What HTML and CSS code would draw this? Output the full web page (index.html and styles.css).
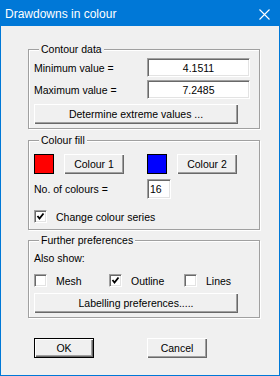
FILE: index.html
```html
<!DOCTYPE html>
<html lang="en">
<head>
    <meta charset="UTF-8">
    <title>Drawdowns in colour</title>
    <link rel="stylesheet" href="styles.css">
</head>
<body>
    <div class="window">
        <div class="titlebar">
            <span class="title">Drawdowns in colour</span>
            <svg class="close" width="11" height="11" viewBox="0 0 11 11">
                <path d="M0.5 0.5 L10.5 10.5 M10.5 0.5 L0.5 10.5" stroke="#fff" stroke-width="1.1" fill="none"/>
            </svg>
        </div>
        <div class="client">
            <fieldset class="group contour">
                <legend>Contour data</legend>
                <div class="row first">
                    <span class="label">Minimum value =</span>
                    <input class="edit value" type="text" value="4.1511">
                </div>
                <div class="row">
                    <span class="label">Maximum value =</span>
                    <input class="edit value" type="text" value="7.2485">
                </div>
                <button class="btn wide">Determine extreme values ...</button>
            </fieldset>

            <fieldset class="group fill">
                <legend>Colour fill</legend>
                <div class="row swatches">
                    <span class="swatch red"></span>
                    <button class="btn colour">Colour 1</button>
                    <span class="swatch blue"></span>
                    <button class="btn colour">Colour 2</button>
                </div>
                <div class="row count">
                    <span class="label">No. of colours =</span>
                    <input class="edit small" type="text" value="16">
                </div>
                <label class="check series">
                    <span class="box checked"><svg width="11" height="11" viewBox="0 0 11 11"><path d="M2.5 5 L4.5 7.5 L8.5 2.5" stroke="#000" stroke-width="1.8" fill="none"/></svg></span>
                    <span>Change colour series</span>
                </label>
            </fieldset>

            <fieldset class="group prefs">
                <legend>Further preferences</legend>
                <div class="also">Also show:</div>
                <div class="checks">
                    <label class="check"><span class="box"></span><span>Mesh</span></label>
                    <label class="check"><span class="box checked"><svg width="11" height="11" viewBox="0 0 11 11"><path d="M2.5 5 L4.5 7.5 L8.5 2.5" stroke="#000" stroke-width="1.8" fill="none"/></svg></span><span>Outline</span></label>
                    <label class="check"><span class="box"></span><span>Lines</span></label>
                </div>
                <button class="btn wide">Labelling preferences.....</button>
            </fieldset>

            <div class="actions">
                <button class="btn default">OK</button>
                <button class="btn">Cancel</button>
            </div>
        </div>
    </div>
</body>
</html>
```

FILE: styles.css
```css
* {
    margin: 0;
    padding: 0;
    box-sizing: border-box;
}

body {
    background-color: #f0f0f0;
    font-family: "Liberation Sans", Arial, sans-serif;
    font-size: 10.5px;
    color: #000;
}

.window {
    width: 280px;
    height: 376px;
    border: 1px solid #0078d7;
    background-color: #f0f0f0;
}

.titlebar {
    height: 25px;
    background-color: #0078d7;
    color: #fff;
    display: flex;
    align-items: center;
    justify-content: space-between;
    padding: 0 9px 0 4px;
}

.title {
    font-size: 12px;
}

.close {
    display: block;
    margin-top: 1px;
}

.group {
    width: 232px;
    margin-left: 27px;
    padding: 0 5px;
    min-width: 0;
    border: 1px solid #a0a0a0;
    box-shadow: inset 1px 1px 0 #fff, 1px 1px 0 #fff;
}

.group legend {
    margin-left: 5px;
    padding: 0 2px;
    line-height: 13px;
    background-color: #f0f0f0;
}

.contour {
    margin-top: 17px;
    padding-bottom: 4px;
}

.fill {
    margin-top: 5px;
    padding-bottom: 5px;
}

.prefs {
    margin-top: 4px;
    padding-bottom: 4px;
}

.row {
    display: flex;
    align-items: center;
    height: 19px;
    margin-top: 3px;
}

.row.first {
    margin-top: 2px;
}

.label {
    width: 113px;
}

.edit {
    height: 19px;
    font-family: inherit;
    font-size: 10.5px;
    color: #000;
    background-color: #fff;
    border: 1px solid;
    border-color: #a0a0a0 #fff #fff #a0a0a0;
    box-shadow: inset 1px 1px 0 #696969, inset -1px -1px 0 #e3e3e3;
    outline: none;
}

.edit.value {
    width: 103px;
    text-align: center;
}

.edit.small {
    width: 24px;
    height: 20px;
    padding-left: 2px;
}

.btn {
    display: block;
    height: 20px;
    font-family: inherit;
    font-size: 10.5px;
    color: #000;
    background-color: #f0f0f0;
    border: none;
    box-shadow: inset 1px 1px 0 #fff, inset -1px -1px 0 #696969, inset -2px -2px 0 #a0a0a0;
}

.btn.wide {
    width: 204px;
    margin-top: 5px;
}

.swatches {
    height: 20px;
    margin-top: 7px;
}

.swatch {
    width: 20px;
    height: 20px;
    border: 1px solid #000;
}

.swatch.red {
    background-color: #ff0000;
    margin-right: 10px;
}

.swatch.blue {
    background-color: #0000ff;
    margin: 0 10px 0 23px;
}

.btn.colour {
    width: 60px;
}

.count {
    height: 20px;
    margin-top: 5px;
}

.check {
    display: flex;
    align-items: center;
    gap: 9px;
    height: 15px;
}

.series {
    margin-top: 10px;
}

.box {
    width: 13px;
    height: 13px;
    background-color: #fff;
    border: 1px solid;
    border-color: #a0a0a0 #fff #fff #a0a0a0;
    box-shadow: inset 1px 1px 0 #696969, inset -1px -1px 0 #e3e3e3;
    display: flex;
    align-items: center;
    justify-content: center;
}

.box svg {
    display: block;
}

.also {
    line-height: 13px;
    margin-top: 5px;
}

.checks {
    display: grid;
    grid-template-columns: 75px 75px 75px;
    margin-top: 8px;
}

.actions {
    display: flex;
    gap: 53px;
    margin: 20px 0 0 33px;
}

.actions .btn {
    width: 60px;
}

.btn.default {
    border: 1px solid #000;
    box-shadow: inset 1px 1px 0 #fff, inset -1px -1px 0 #696969, inset -2px -2px 0 #a0a0a0;
}
```
